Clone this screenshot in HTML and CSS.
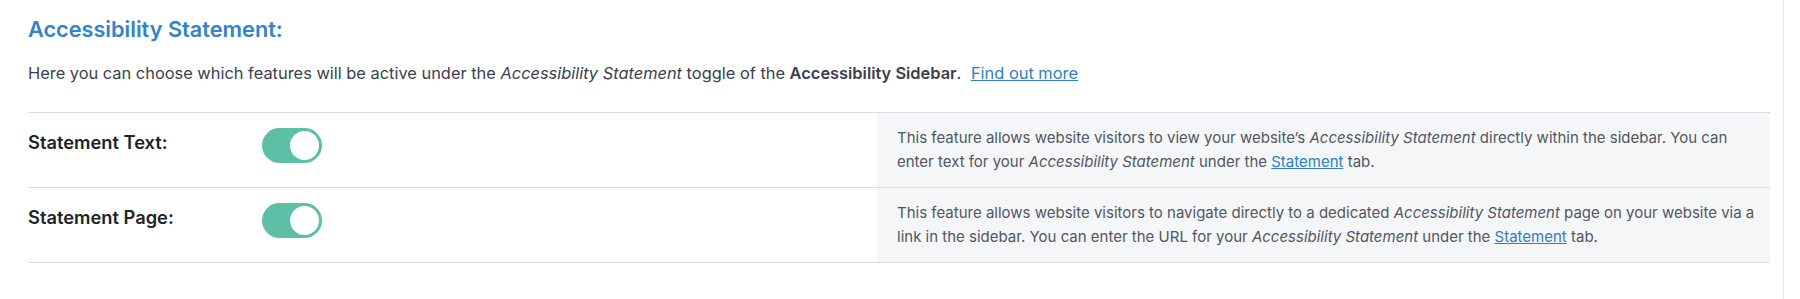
FILE: index.html
```html
<!DOCTYPE html>
<html lang="en">
<head>
  <meta charset="UTF-8" />
  <meta name="viewport" content="width=device-width, initial-scale=1.0"/>
  <title>Accessibility Statement</title>
  <link rel="stylesheet" href="styles.css">
</head>
<body>

  <div class="panel">
    <h2 class="section-title">Accessibility Statement:</h2>
    <p class="section-intro">
      Here you can choose which features will be active under the <em>Accessibility Statement</em> toggle of the <strong>Accessibility Sidebar</strong>.
      <a href="#" class="more-link">Find out more</a>
    </p>

    <div class="settings">
      <div class="setting-row">
        <div class="setting-label">Statement Text:</div>
        <div class="setting-control">
          <label class="toggle">
            <input type="checkbox" checked />
            <span class="slider"></span>
          </label>
        </div>
        <div class="setting-desc">
          This feature allows website visitors to view your website’s <em>Accessibility Statement</em> directly within the sidebar. You can enter text for your <em>Accessibility Statement</em> under the <a href="#">Statement</a> tab.
        </div>
      </div>

      <div class="setting-row">
        <div class="setting-label">Statement Page:</div>
        <div class="setting-control">
          <label class="toggle">
            <input type="checkbox" checked />
            <span class="slider"></span>
          </label>
        </div>
        <div class="setting-desc">
          This feature allows website visitors to navigate directly to a dedicated <em>Accessibility Statement</em> page on your website via a link in the sidebar. You can enter the URL for your <em>Accessibility Statement</em> under the <a href="#">Statement</a> tab.
        </div>
      </div>
    </div>
  </div>

</body>
</html>
```

FILE: styles.css
```css
body {
  font-family: Inter, "Noto Sans", sans-serif;
  background-color: #ffffff;
  margin: 0;
  padding: 0;
}

.panel {
  width: 1784px;
  height: 299px;
  box-sizing: border-box;
  padding: 0 13px 0 28px;
  border-right: 1px solid #e6e7e9;
}

.section-title {
  margin: 0;
  padding-top: 14px;
  font-size: 21.7px;
  font-weight: 600;
  line-height: 30px;
  color: #3583c6;
}

.section-intro {
  margin: 17px 0 0;
  font-size: 16.4px;
  line-height: 24px;
  color: #3a4050;
}

.section-intro strong {
  font-weight: 600;
}

.more-link {
  margin-left: 5px;
  color: #2f7ec3;
}

.settings {
  margin-top: 27px;
  border-top: 1px solid #dcdde0;
}

.setting-row {
  display: grid;
  grid-template-columns: 234px 615px 1fr;
  height: 74px;
  border-bottom: 1px solid #dcdde0;
}

.setting-label {
  padding-top: 17px;
  font-size: 18.3px;
  font-weight: 600;
  line-height: 25px;
  color: #1d2327;
}

.setting-control {
  padding-top: 15px;
}

.setting-desc {
  background-color: #f5f6f8;
  padding: 13px 14px 0 20px;
  font-size: 15px;
  line-height: 24px;
  color: #505663;
}

.setting-desc a {
  color: #2f7ec3;
}

.toggle {
  position: relative;
  display: inline-block;
  width: 60px;
  height: 35px;
}

.toggle input {
  opacity: 0;
  width: 0;
  height: 0;
}

.slider {
  position: absolute;
  inset: 0;
  background-color: #5cbfa6;
  border-radius: 18px;
  cursor: pointer;
}

.slider::before {
  content: "";
  position: absolute;
  top: 3px;
  right: 3px;
  width: 29px;
  height: 29px;
  border-radius: 50%;
  background-color: #ffffff;
}
```
